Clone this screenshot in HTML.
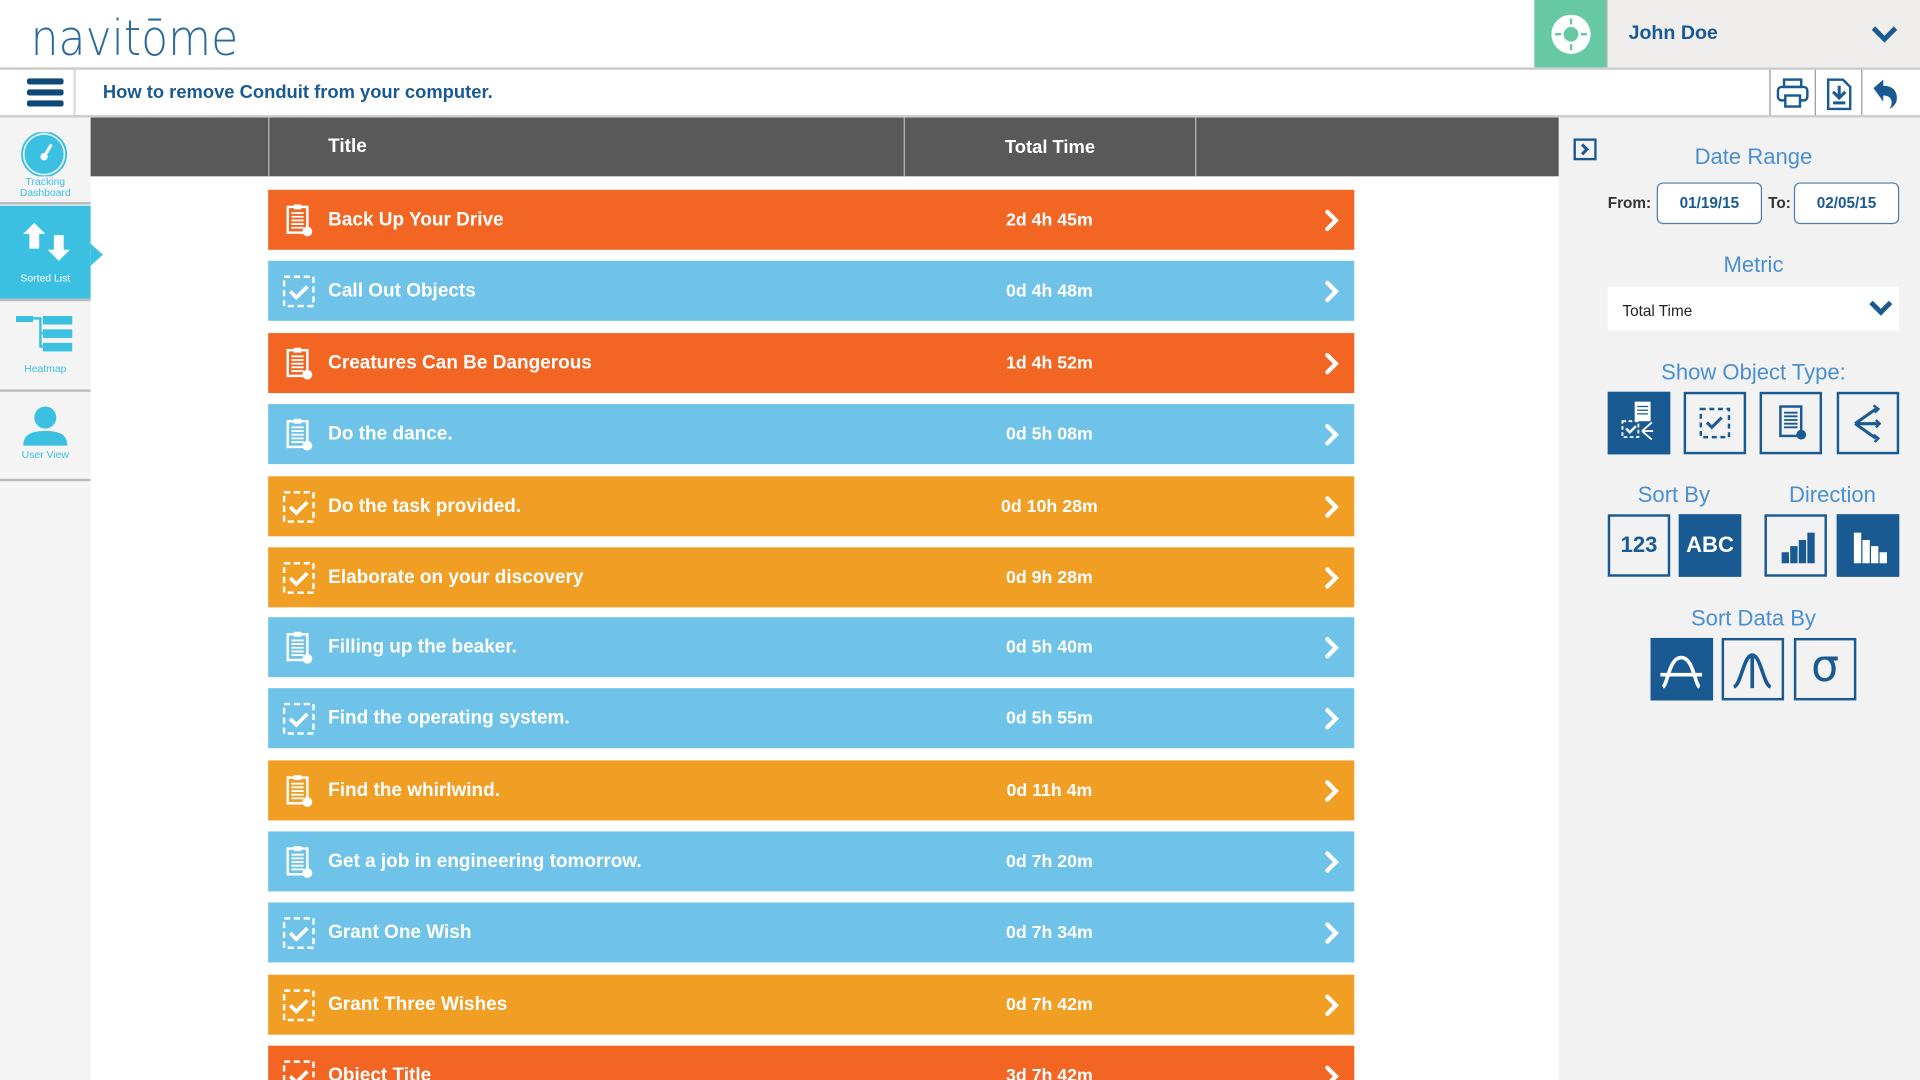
<!DOCTYPE html>
<html><head><meta charset="utf-8"><style>
*{margin:0;padding:0;box-sizing:border-box}
html,body{width:1920px;height:1080px;overflow:hidden;background:#fff;font-family:"Liberation Sans",sans-serif}
#w{position:absolute;left:0;top:0;width:1568px;height:882px;transform:scale(1.22449);transform-origin:0 0;overflow:hidden;background:#fff}
.a{position:absolute}
.row{position:absolute;left:219px;width:887px;height:49px;color:#fff;font-weight:bold;font-size:15.5px}
.row .t{position:absolute;left:49px;top:16px}
.row .tm{position:absolute;left:560px;width:156px;text-align:center;top:17px;font-size:14.5px}
.row svg.ic{position:absolute;left:11px;top:11px}
.row svg.ch{position:absolute;left:862px;top:15px}
.o{background:#f26522}.b{background:#70c3e8}.y{background:#f19e25}
.side{position:absolute;left:0;width:74px;text-align:center;font-size:8.5px;color:#3cc0e2}
.btn{position:absolute;width:51px;height:51px;border:2px solid #1a5a92;background:#f2f2f2}
.btn.on{background:#1a5a92}
.lbl{position:absolute;color:#4a90d0;font-size:18px;text-align:center}
</style></head><body><div id="w">
<div class="a" style="left:25px;top:9px;font-size:40px;color:#2a6a9a;font-weight:200;font-family:'DejaVu Sans',sans-serif;transform:scaleX(0.9);transform-origin:0 0">navitōme</div>
<div class="a" style="left:0;top:55px;width:1568px;height:2px;background:#ccc"></div>
<div class="a" style="left:1253px;top:0;width:59px;height:55px;background:#66c9a4"></div>
<svg class="a" style="left:1266px;top:11px" width="34" height="34" viewBox="0 0 34 34"><circle cx="17" cy="17" r="16" fill="#fff"/><circle cx="17" cy="17" r="6" fill="#66c9a4"/><path d="M17 4v5M17 25v5M4 17h5M25 17h5" stroke="#66c9a4" stroke-width="2"/></svg>
<div class="a" style="left:1312px;top:0;width:256px;height:55px;background:#efeeec;border-left:1px solid #bbb"></div>
<div class="a" style="left:1330px;top:19px;font-size:16px;font-weight:bold;color:#1a5a92">John Doe</div>
<svg class="a" style="left:1528px;top:20px" width="22" height="16"><path d="M2 3l9 9 9-9" stroke="#1a5a92" stroke-width="4" fill="none"/></svg>
<div class="a" style="left:0;top:94px;width:1568px;height:2px;background:#ccc"></div>
<div class="a" style="left:60px;top:57px;width:2px;height:37px;background:#ddd"></div>
<svg class="a" style="left:22px;top:63px" width="30" height="26"><rect x="0" y="1" width="30" height="5" rx="2" fill="#0d4a7a"/><rect x="0" y="10" width="30" height="5" rx="2" fill="#0d4a7a"/><rect x="0" y="19" width="30" height="5" rx="2" fill="#0d4a7a"/></svg>
<div class="a" style="left:84px;top:67px;font-size:15px;font-weight:bold;color:#1a5a92">How to remove Conduit from your computer.</div>
<div class="a" style="left:1445px;top:57px;width:1px;height:37px;background:#999"></div>
<div class="a" style="left:1482px;top:57px;width:1px;height:37px;background:#999"></div>
<div class="a" style="left:1520px;top:57px;width:1px;height:37px;background:#999"></div>
<svg class="a" style="left:1450px;top:63px" width="28" height="26"><rect x="7" y="2" width="14" height="6" fill="none" stroke="#1a5a92" stroke-width="2"/><rect x="2" y="8" width="24" height="11" rx="3" fill="none" stroke="#1a5a92" stroke-width="2"/><rect x="8" y="15" width="12" height="9" fill="#fff" stroke="#1a5a92" stroke-width="2"/></svg>
<svg class="a" style="left:1491px;top:64px" width="22" height="26"><path d="M2 1h12l6 6v18H2z" fill="none" stroke="#1a5a92" stroke-width="2"/><path d="M11 6v10M6 11l5 5 5-5M6 20h10" stroke="#1a5a92" stroke-width="2.5" fill="none"/></svg>
<svg class="a" style="left:1528px;top:64px" width="24" height="26"><path d="M2 8l8-7v5c8 0 12 5 11 12-1 4-4 6-6 7 3-4 3-11-5-11v5z" fill="#1a5a92"/></svg>
<div class="a" style="left:0;top:96px;width:74px;height:786px;background:#f4f4f4"></div>
<svg class="a" style="left:17px;top:108px" width="38" height="36"><circle cx="19" cy="18" r="16" fill="#3cc0e2"/><circle cx="19" cy="18" r="18" fill="none" stroke="#3cc0e2" stroke-width="1.5"/><path d="M19 20l6-10" stroke="#fff" stroke-width="2.5"/><circle cx="19" cy="20" r="3" fill="#fff"/></svg>
<div class="side" style="top:144px;line-height:9px">Tracking<br>Dashboard</div>
<div class="a" style="left:0;top:165px;width:74px;height:2px;background:#bbb"></div>
<div class="a" style="left:0;top:168px;width:74px;height:76px;background:#3cc0e2"></div>
<div class="a" style="left:74px;top:199px;width:0;height:0;border-top:9px solid transparent;border-bottom:9px solid transparent;border-left:10px solid #3cc0e2"></div>
<svg class="a" style="left:18px;top:180px" width="40" height="36"><path d="M10 2l-9 9h5v12h8V11h5z" fill="#fff"/><path d="M30 33l9-9h-5V12h-8v12h-5z" fill="#fff"/></svg>
<div class="side" style="top:222px;color:#fff">Sorted List</div>
<div class="a" style="left:0;top:244px;width:74px;height:2px;background:#bbb"></div>
<svg class="a" style="left:13px;top:258px" width="48" height="32"><rect x="0" y="0" width="14" height="5" fill="#3cc0e2"/><rect x="22" y="0" width="24" height="7" fill="#3cc0e2"/><rect x="22" y="11" width="24" height="7" fill="#3cc0e2"/><rect x="22" y="22" width="24" height="7" fill="#3cc0e2"/><path d="M14 2h6v23h2M20 14h2" stroke="#3cc0e2" stroke-width="2" fill="none"/></svg>
<div class="side" style="top:296px">Heatmap</div>
<div class="a" style="left:0;top:318px;width:74px;height:2px;background:#bbb"></div>
<svg class="a" style="left:18px;top:330px" width="38" height="34"><circle cx="19" cy="11" r="9" fill="#3cc0e2"/><path d="M1 34c0-10 8-12 18-12s18 2 18 12z" fill="#3cc0e2"/></svg>
<div class="side" style="top:366px">User View</div>
<div class="a" style="left:0;top:391px;width:74px;height:2px;background:#bbb"></div>
<div class="a" style="left:74px;top:96px;width:1199px;height:48px;background:#595959"></div>
<div class="a" style="left:219px;top:96px;width:1px;height:48px;background:#bbb"></div>
<div class="a" style="left:738px;top:96px;width:1px;height:48px;background:#bbb"></div>
<div class="a" style="left:976px;top:96px;width:1px;height:48px;background:#bbb"></div>
<div class="a" style="left:268px;top:111px;color:#fff;font-weight:bold;font-size:15.5px">Title</div>
<div class="a" style="left:739px;width:237px;text-align:center;top:112px;color:#fff;font-weight:bold;font-size:15px">Total Time</div>
<div class="a" style="left:1273px;top:96px;width:295px;height:786px;background:#f2f2f2"></div>
<svg class="a" style="left:1285px;top:113px" width="19" height="18"><rect x="1" y="1" width="17" height="16" fill="none" stroke="#1a5a92" stroke-width="2"/><path d="M7 5l4 4-4 4" stroke="#1a5a92" stroke-width="2.5" fill="none"/></svg>
<div class="lbl" style="left:1312px;width:240px;top:118px">Date Range</div>
<div class="a" style="left:1313px;top:159px;font-size:12.5px;font-weight:bold;color:#333">From:</div>
<div class="a" style="left:1353px;top:149px;width:86px;height:34px;border:1px solid #4a7cb0;border-radius:5px;background:#fff;text-align:center;line-height:32px;font-size:12.5px;color:#1a5a92;font-weight:bold">01/19/15</div>
<div class="a" style="left:1444px;top:159px;font-size:12.5px;font-weight:bold;color:#333">To:</div>
<div class="a" style="left:1465px;top:149px;width:86px;height:34px;border:1px solid #4a7cb0;border-radius:5px;background:#fff;text-align:center;line-height:32px;font-size:12.5px;color:#1a5a92;font-weight:bold">02/05/15</div>
<div class="lbl" style="left:1312px;width:240px;top:206px">Metric</div>
<div class="a" style="left:1313px;top:234px;width:238px;height:36px;background:#fff"></div>
<div class="a" style="left:1325px;top:247px;font-size:12.5px;color:#222">Total Time</div>
<svg class="a" style="left:1526px;top:245px" width="20" height="14"><path d="M2 2l8 8 8-8" stroke="#1a5a92" stroke-width="4" fill="none"/></svg>
<div class="lbl" style="left:1312px;width:240px;top:294px">Show Object Type:</div>
<div class="btn on" style="left:1313px;top:320px"><svg width="47" height="47"><rect x="20" y="6" width="13" height="16" fill="#fff"/><path d="M22 10h9M22 13h9M22 16h9" stroke="#1a5a92"/><rect x="10" y="22" width="13" height="13" fill="none" stroke="#fff" stroke-width="1.5" stroke-dasharray="3 2"/><path d="M13 28l3 3 5-5" stroke="#fff" stroke-width="2" fill="none"/><path d="M26 30l8-7M26 30h9M26 30l8 7" stroke="#fff" stroke-width="1.5"/></svg></div>
<div class="btn" style="left:1375px;top:320px"><svg width="47" height="47"><rect x="12" y="12" width="23" height="23" fill="none" stroke="#1a5a92" stroke-width="2" stroke-dasharray="4 3"/><path d="M17 23l4 4 8-8" stroke="#1a5a92" stroke-width="2.5" fill="none"/></svg></div>
<div class="btn" style="left:1437px;top:320px"><svg width="47" height="47"><rect x="15" y="10" width="17" height="24" fill="none" stroke="#1a5a92" stroke-width="2"/><path d="M18 15h11M18 18h11M18 21h11M18 24h11M18 27h11" stroke="#1a5a92" stroke-width="1.5"/><circle cx="32" cy="33" r="4" fill="#1a5a92"/></svg></div>
<div class="btn" style="left:1500px;top:320px"><svg width="47" height="47"><path d="M13 24l17-12M13 24h19M13 24l17 12" stroke="#1a5a92" stroke-width="2.5" fill="none"/><path d="M28 9l4 3-3 3M30 21l3 3-3 3M28 33l4 3-3 3" stroke="#1a5a92" stroke-width="2" fill="none"/></svg></div>
<div class="lbl" style="left:1313px;width:108px;top:394px">Sort By</div>
<div class="lbl" style="left:1441px;width:111px;top:394px">Direction</div>
<div class="btn" style="left:1313px;top:420px;text-align:center;line-height:47px;font-weight:bold;font-size:18px;color:#1a5a92">123</div>
<div class="btn on" style="left:1371px;top:420px;text-align:center;line-height:47px;font-weight:bold;font-size:18px;color:#fff">ABC</div>
<div class="btn" style="left:1441px;top:420px"><svg width="47" height="47"><rect x="12" y="29" width="6" height="9" fill="#1a5a92"/><rect x="19" y="24" width="6" height="14" fill="#1a5a92"/><rect x="26" y="19" width="6" height="19" fill="#1a5a92"/><rect x="33" y="13" width="6" height="25" fill="#1a5a92"/></svg></div>
<div class="btn on" style="left:1500px;top:420px"><svg width="47" height="47"><rect x="12" y="13" width="6" height="25" fill="#fff"/><rect x="19" y="19" width="6" height="19" fill="#fff"/><rect x="26" y="24" width="6" height="14" fill="#fff"/><rect x="33" y="29" width="6" height="9" fill="#fff"/></svg></div>
<div class="lbl" style="left:1312px;width:240px;top:495px">Sort Data By</div>
<div class="btn on" style="left:1348px;top:521px"><svg width="47" height="47"><path d="M8 38c4-2 5-24 15-24s11 22 15 24M6 28h34" stroke="#fff" stroke-width="3" fill="none"/></svg></div>
<div class="btn" style="left:1406px;top:521px"><svg width="47" height="47"><path d="M8 38c6-2 8-26 15-26s9 24 15 26M23 12v27" stroke="#1a5a92" stroke-width="3" fill="none"/></svg></div>
<div class="btn" style="left:1465px;top:521px;text-align:center;line-height:44px;font-size:36px;color:#1a5a92;font-family:'DejaVu Sans',sans-serif">σ</div>
<div id="rows"></div>
</div>
<script>
var d=[["Back Up Your Drive","o","c","2d 4h 45m"],["Call Out Objects","b","k","0d 4h 48m"],["Creatures Can Be Dangerous","o","c","1d 4h 52m"],["Do the dance.","b","c","0d 5h 08m"],["Do the task provided.","y","k","0d 10h 28m"],["Elaborate on your discovery","y","k","0d 9h 28m"],["Filling up the beaker.","b","c","0d 5h 40m"],["Find the operating system.","b","k","0d 5h 55m"],["Find the whirlwind.","y","c","0d 11h 4m"],["Get a job in engineering tomorrow.","b","c","0d 7h 20m"],["Grant One Wish","b","k","0d 7h 34m"],["Grant Three Wishes","y","k","0d 7h 42m"],["Object Title","o","k","3d 7h 42m"]];
var tops=[155,213,272,330,389,447,504,562,621,679,737,796,854];
var clip='<svg class="ic" width="28" height="28"><rect x="5" y="3" width="16" height="21" fill="none" stroke="#fff" stroke-width="2"/><rect x="10" y="1" width="6" height="4" fill="#fff"/><path d="M8 8h10M8 11h10M8 14h10M8 17h10M8 20h10" stroke="#fff" stroke-width="1.5"/><circle cx="21" cy="23" r="4" fill="#fff"/></svg>';
var chk='<svg class="ic" width="28" height="28"><rect x="2" y="2" width="24" height="24" fill="none" stroke="#fff" stroke-width="2" stroke-dasharray="5 3"/><path d="M7 14l5 5 9-9" stroke="#fff" stroke-width="3" fill="none"/></svg>';
var h='';
for(var i=0;i<d.length;i++){var r=d[i];h+='<div class="row '+r[1]+'" style="top:'+tops[i]+'px">'+(r[2]=="c"?clip:chk)+'<span class="t">'+r[0]+'</span><span class="tm">'+r[3]+'</span><svg class="ch" width="14" height="20"><path d="M3 3l7 7-7 7" stroke="#fff" stroke-width="3.5" fill="none" stroke-linecap="round"/></svg></div>';}
document.getElementById('rows').innerHTML=h;
</script>
</body></html>
